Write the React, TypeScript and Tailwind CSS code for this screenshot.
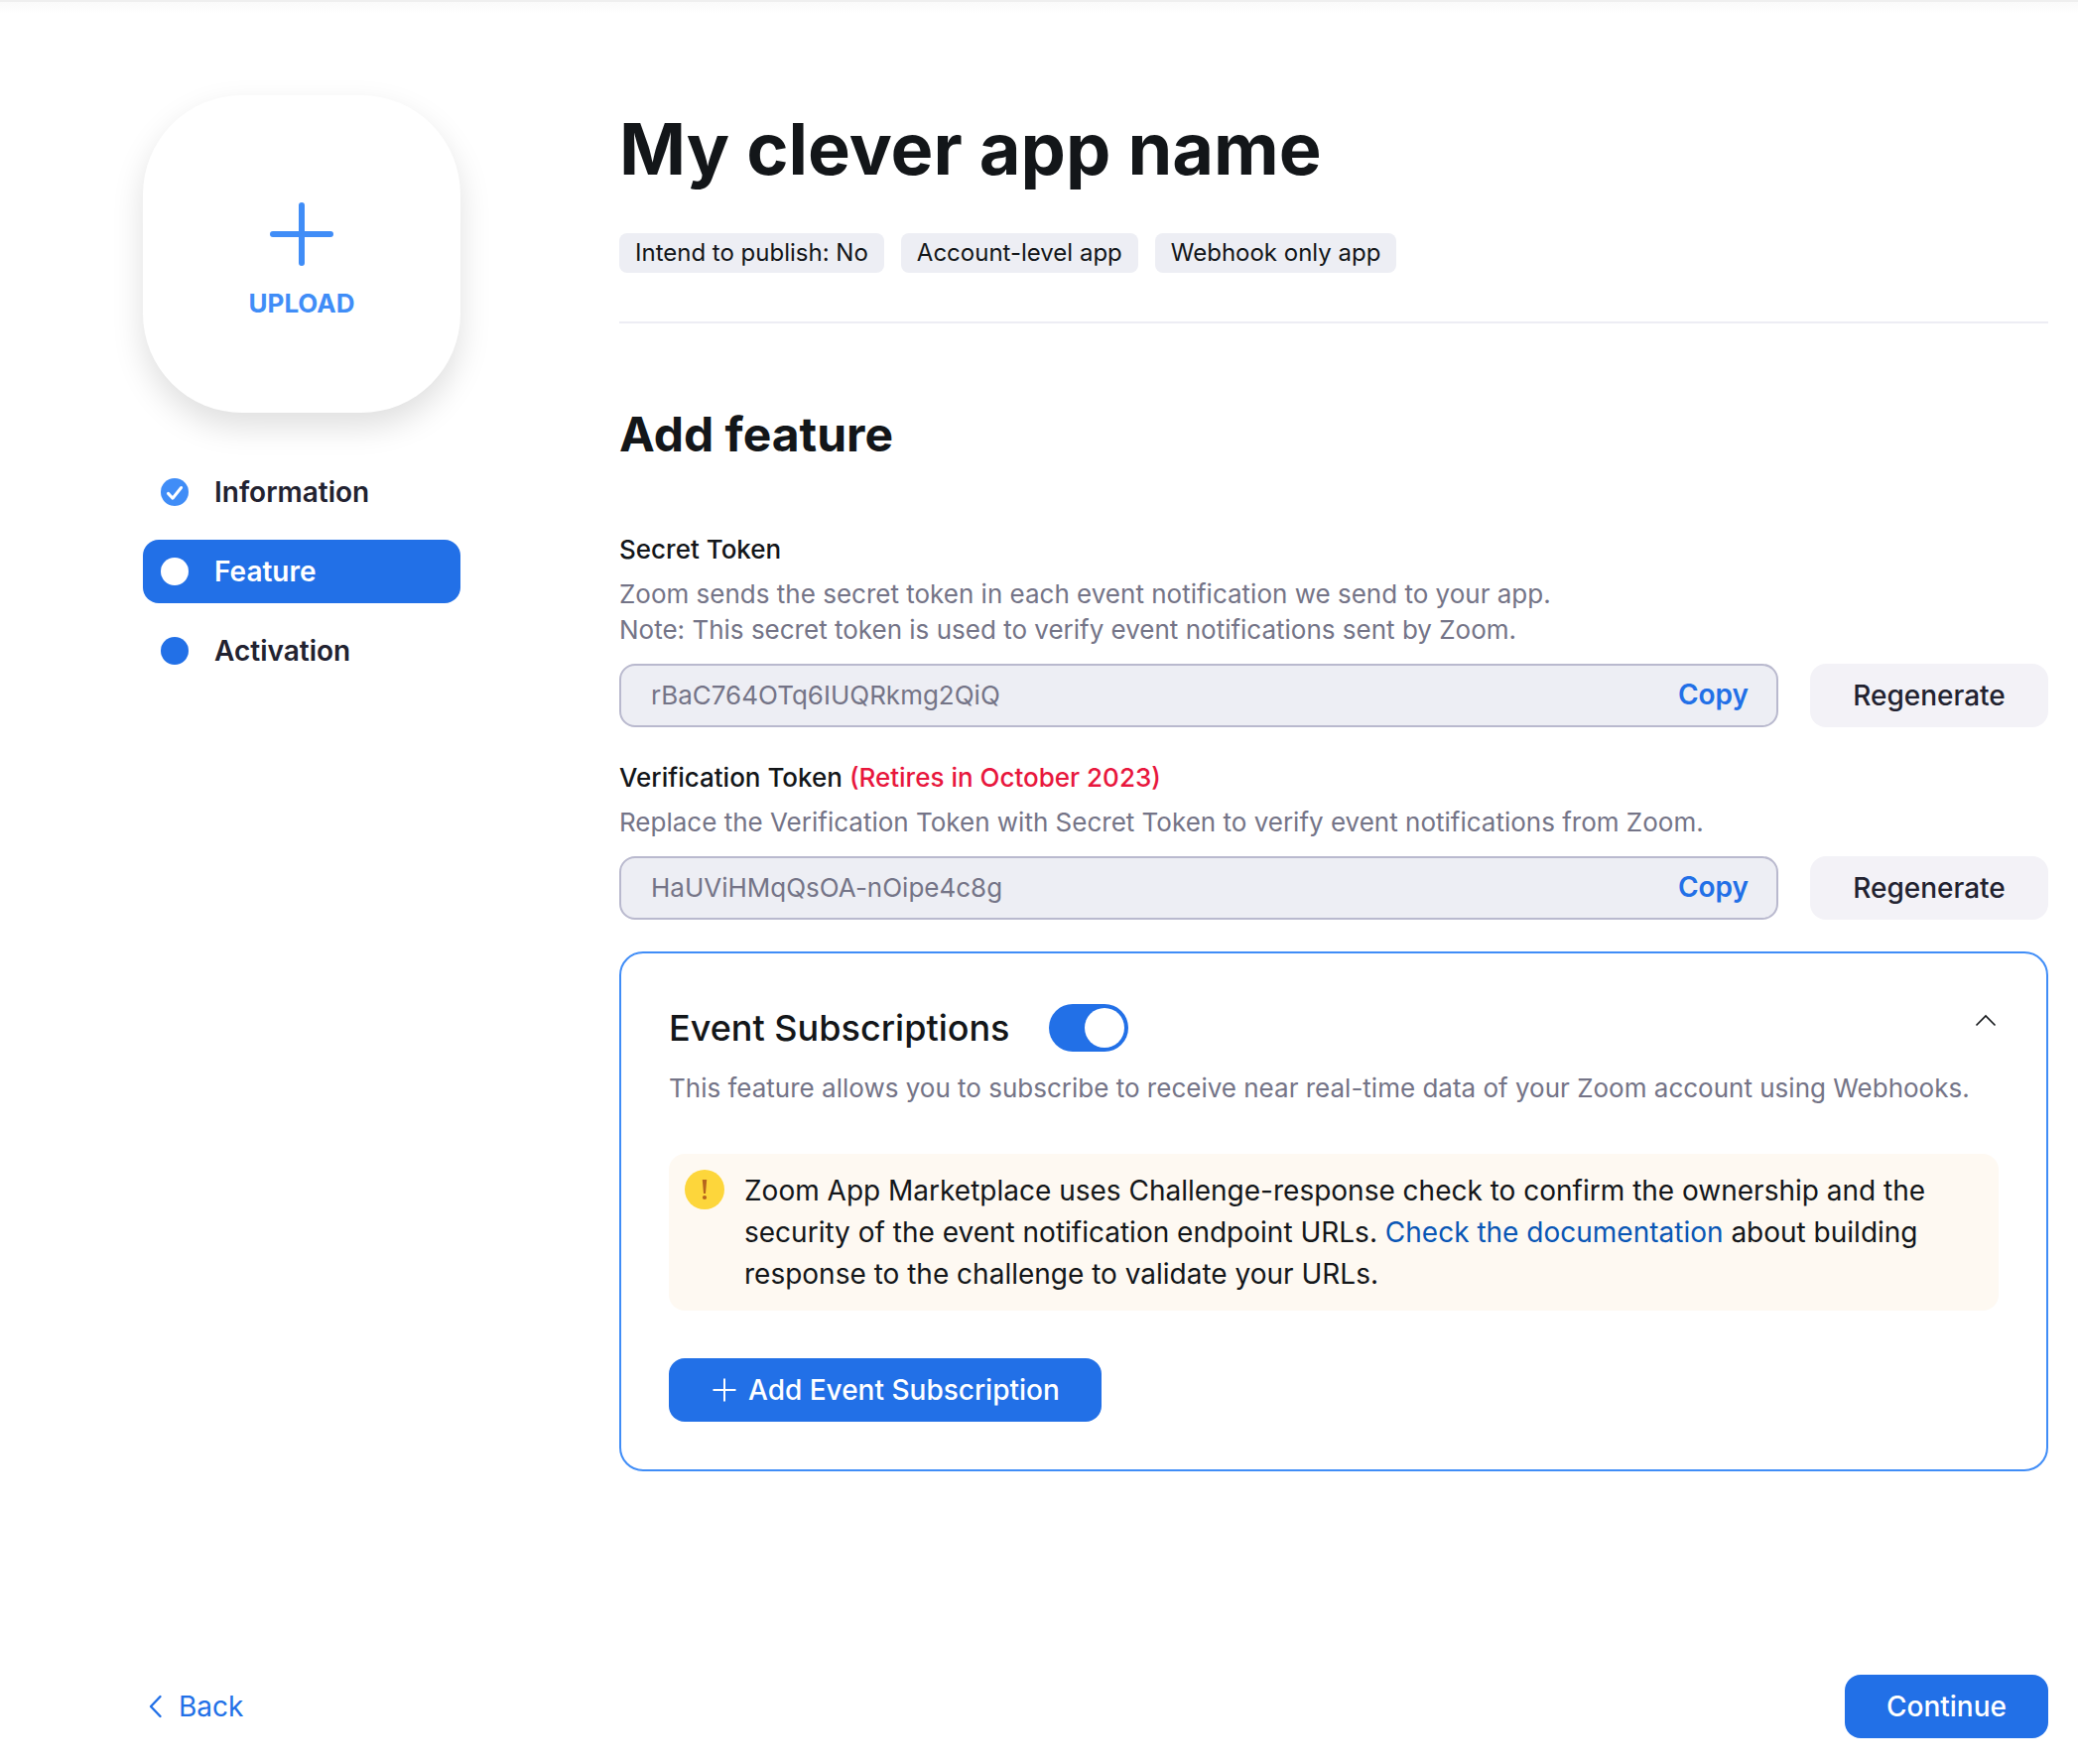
import { useState } from 'react';

type Step = { label: string; state: 'done' | 'current' | 'todo' };

const steps: Step[] = [
  { label: 'Information', state: 'done' },
  { label: 'Feature', state: 'current' },
  { label: 'Activation', state: 'todo' },
];

const tags = ['Intend to publish: No', 'Account-level app', 'Webhook only app'];

function StepIcon({ state }: { state: Step['state'] }) {
  if (state === 'done') {
    return (
      <svg viewBox="0 0 28 28" className="size-7" aria-hidden="true">
        <circle cx="14" cy="14" r="14" fill="#408df7" />
        <path
          d="M7.5 15.4 L12 20.2 L20.6 9.5"
          fill="none"
          stroke="#fff"
          strokeWidth="3"
          strokeLinecap="round"
          strokeLinejoin="round"
        />
      </svg>
    );
  }
  return (
    <span
      className={
        state === 'current' ? 'size-7 rounded-full bg-white' : 'size-7 rounded-full bg-[#2270e7]'
      }
    />
  );
}

function Sidebar() {
  return (
    <aside className="flex w-80 shrink-0 flex-col gap-12">
      <button
        type="button"
        className="flex h-80 flex-col items-center justify-center rounded-[100px] bg-white pt-4 shadow-[0_14px_32px_rgba(0,0,0,0.13)]"
      >
        <svg viewBox="0 0 64 64" className="size-16" aria-hidden="true">
          <path d="M32 3 V61 M3 32 H61" stroke="#408df7" strokeWidth="6" strokeLinecap="round" />
        </svg>
        <span className="mt-5 text-[26px] leading-9 font-bold text-[#408df7]">UPLOAD</span>
      </button>
      <nav aria-label="App setup" className="flex flex-col gap-4">
        {steps.map((step) => (
          <a
            key={step.label}
            href={'#' + step.label.toLowerCase()}
            aria-current={step.state === 'current' ? 'step' : undefined}
            className={
              step.state === 'current'
                ? 'flex h-16 items-center gap-[26px] rounded-2xl bg-[#2270e7] px-[18px] text-[28px] font-semibold text-white'
                : 'flex h-16 items-center gap-[26px] rounded-2xl px-[18px] text-[28px] font-semibold text-[#222230]'
            }
          >
            <StepIcon state={step.state} />
            {step.label}
          </a>
        ))}
      </nav>
    </aside>
  );
}

type TokenFieldProps = {
  id: string;
  label: string;
  warning?: string;
  lines: string[];
  value: string;
};

function TokenField({ id, label, warning, lines, value }: TokenFieldProps) {
  return (
    <div>
      <label htmlFor={id} className="block text-[26px] leading-9 font-medium">
        {label} {warning && <span className="text-[#e8173d]">{warning}</span>}
      </label>
      <div className="mt-[9px] text-[26px] leading-9 text-[#747487]">
        {lines.map((line) => (
          <p key={line}>{line}</p>
        ))}
      </div>
      <div className="mt-4 flex gap-8">
        <div className="flex h-16 flex-1 items-center rounded-2xl border-2 border-[#b9b9ce] bg-[#edeef4] pr-7 pl-[30px]">
          <input
            id={id}
            readOnly
            value={value}
            className="min-w-0 flex-1 bg-transparent text-[26px] leading-9 text-[#747487] outline-none"
          />
          <button type="button" className="pb-0.5 text-[28px] leading-9 font-semibold text-[#2270e7]">
            Copy
          </button>
        </div>
        <button
          type="button"
          className="h-16 w-60 shrink-0 rounded-2xl bg-[#f3f2f7] text-[28px] font-medium text-[#222230]"
        >
          Regenerate
        </button>
      </div>
    </div>
  );
}

function EventSubscriptions() {
  const [enabled, setEnabled] = useState(true);
  return (
    <section className="mt-8 rounded-3xl border-2 border-[#408df7] p-12">
      <div className="flex items-start justify-between">
        <div className="flex items-center gap-[39px]">
          <h3 id="event-subscriptions" className="text-[36px] leading-[54px] font-medium">
            Event Subscriptions
          </h3>
          <button
            type="button"
            role="switch"
            aria-checked={enabled}
            aria-labelledby="event-subscriptions"
            onClick={() => setEnabled(!enabled)}
            className={
              enabled
                ? 'flex h-12 w-20 justify-end rounded-full bg-[#2270e7] p-1'
                : 'flex h-12 w-20 justify-start rounded-full bg-[#b9b9ce] p-1'
            }
          >
            <span className="size-10 rounded-full bg-white" />
          </button>
        </div>
        <button type="button" aria-label="Collapse" className="mt-2 flex size-6 items-center justify-center">
          <svg viewBox="0 0 24 24" className="size-6" aria-hidden="true">
            <path d="M1.5 16.5 L11 7 L20.5 16.5" fill="none" stroke="#131619" strokeWidth="1.6" />
          </svg>
        </button>
      </div>
      <p className="mt-4 text-[26px] leading-9 text-[#747487]">
        This feature allows you to subscribe to receive near real-time data of your Zoom account using
        Webhooks.
      </p>
      <div className="mt-12 flex gap-5 rounded-2xl bg-[#fef9f2] p-4">
        <svg viewBox="0 0 40 40" className="size-10 shrink-0" aria-hidden="true">
          <circle cx="20" cy="20" r="20" fill="#fdd63b" />
          <path d="M17.8 10 H22.2 L21 24 H19 Z" fill="#b5651d" />
          <circle cx="20" cy="28" r="2.1" fill="#b5651d" />
        </svg>
        <p className="pr-8 text-[28px] leading-[42px]">
          Zoom App Marketplace uses Challenge-response check to confirm the ownership and the security
          of the event notification endpoint URLs.{' '}
          <a href="#documentation" className="text-[#0956b5]">
            Check the documentation
          </a>{' '}
          about building response to the challenge to validate your URLs.
        </p>
      </div>
      <button
        type="button"
        className="mt-12 flex h-16 items-center gap-3 rounded-2xl bg-[#2270e7] pr-[42px] pl-11 text-[28px] font-medium text-white"
      >
        <svg viewBox="0 0 24 24" className="size-6" aria-hidden="true">
          <path d="M12 0.5 V23.5 M0.5 12 H23.5" stroke="#fff" strokeWidth="2" />
        </svg>
        Add Event Subscription
      </button>
    </section>
  );
}

export default function App() {
  return (
    <div className="flex min-h-screen flex-col border-t-2 border-[#efefef] bg-white font-['Inter',sans-serif] text-[#131619]">
      <div className="h-3 bg-linear-to-b from-[#fafafa] to-white" />
      <div className="flex flex-1 flex-col pr-[30px] pb-[26px] pl-36">
        <div className="flex gap-40 pt-[82px]">
          <Sidebar />
          <main className="min-w-0 flex-1">
            <header className="border-b-2 border-[#ededf4] pb-[49px]">
              <h1 className="pt-2 text-[72px] leading-[92px] font-bold">My clever app name</h1>
              <ul className="mt-[39px] flex gap-[17px]">
                {tags.map((tag) => (
                  <li key={tag} className="rounded-lg bg-[#edeef4] px-4 text-2xl leading-10">
                    {tag}
                  </li>
                ))}
              </ul>
            </header>
            <h2 className="mt-20 text-[48px] leading-[64px] font-bold">Add feature</h2>
            <div className="mt-[66px] flex flex-col gap-[33px]">
              <TokenField
                id="secret-token"
                label="Secret Token"
                lines={[
                  'Zoom sends the secret token in each event notification we send to your app.',
                  'Note: This secret token is used to verify event notifications sent by Zoom.',
                ]}
                value="rBaC764OTq6IUQRkmg2QiQ"
              />
              <TokenField
                id="verification-token"
                label="Verification Token"
                warning="(Retires in October 2023)"
                lines={[
                  'Replace the Verification Token with Secret Token to verify event notifications from Zoom.',
                ]}
                value="HaUViHMqQsOA-nOipe4c8g"
              />
            </div>
            <EventSubscriptions />
          </main>
        </div>
        <footer className="mt-auto flex items-center justify-between">
          <a href="#back" className="flex items-center gap-3 text-[28px] text-[#2270e7]">
            <svg viewBox="0 0 24 24" className="size-6" aria-hidden="true">
              <path
                d="M17.5 2 L8 12 L17.5 22"
                fill="none"
                stroke="currentColor"
                strokeWidth="2.4"
                strokeLinecap="round"
                strokeLinejoin="round"
              />
            </svg>
            Back
          </a>
          <button
            type="button"
            className="h-16 rounded-2xl bg-[#2270e7] px-[42px] text-[28px] font-medium text-white"
          >
            Continue
          </button>
        </footer>
      </div>
    </div>
  );
}
